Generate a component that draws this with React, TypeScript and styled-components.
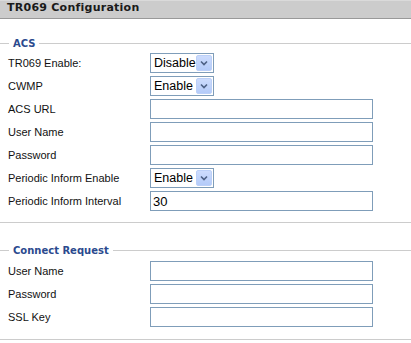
import * as React from "react";
import styled, { createGlobalStyle } from "styled-components";

const GlobalStyle = createGlobalStyle`
  body {
    margin: 0;
    background: #fff;
    font-family: "Liberation Sans", Arial, sans-serif;
  }
`;

const Page = styled.div`
  width: 411px;
  color: #000;
`;

const Header = styled.div`
  height: 17px;
  line-height: 17px;
  background: #cccccc;
  border-top: 1px solid #dadada;
  border-bottom: 1px solid #999;
  padding-left: 7px;
  font: bold 11px "DejaVu Sans", Verdana, sans-serif;
  letter-spacing: 0.25px;
  color: #1a1a1a;
`;

const Section = styled.div<{ top: number }>`
  display: flex;
  flex-direction: column;
  padding-top: ${(p) => p.top}px;
`;

const Legend = styled.div`
  display: flex;
  align-items: center;
  height: 13px;
  font: bold 10px "DejaVu Sans", Verdana, sans-serif;
  color: #2b4a8e;

  &::before,
  &::after {
    content: "";
    border-top: 1px solid #cccccc;
  }
  &::before {
    width: 9px;
  }
  &::after {
    flex: 1;
  }
  span {
    padding: 0 4px;
  }
`;

const Rows = styled.div<{ top: number }>`
  display: flex;
  flex-direction: column;
  gap: 3px;
  padding-top: ${(p) => p.top}px;
`;

const Row = styled.div`
  display: grid;
  grid-template-columns: 150px 1fr;
  align-items: center;
  height: 20px;
`;

const Label = styled.div`
  padding-left: 8px;
  font-size: 11px;
  color: #111;
`;

const TextInput = styled.input`
  box-sizing: border-box;
  width: 223px;
  height: 20px;
  margin: 0;
  border: 1px solid #7f9db9;
  padding: 0 2px;
  font: 13px "Liberation Sans", Arial, sans-serif;
  color: #000;
  outline: none;
`;

const SelectBox = styled.div`
  box-sizing: border-box;
  width: 64px;
  height: 20px;
  border: 1px solid #7f9db9;
  display: flex;
  align-items: center;
  justify-content: space-between;
  font-size: 12.5px;
  background: #fff;

  span {
    padding-left: 3px;
  }
`;

const DropButton = styled.div`
  box-sizing: border-box;
  width: 16px;
  height: 16px;
  margin-right: 1px;
  border: 1px solid #bcd0f8;
  border-radius: 2px;
  background: linear-gradient(#cddcfd, #b4cbf9);
  display: flex;
  align-items: center;
  justify-content: center;
`;

const Divider = styled.div<{ top: number }>`
  margin-top: ${(p) => p.top}px;
  border-top: 1px solid #cccccc;
`;

const Select = ({ value }: { value: string }) => (
  <SelectBox>
    <span>{value}</span>
    <DropButton>
      <svg width="8" height="6" viewBox="0 0 8 6">
        <path d="M1 1.5 L4 4.5 L7 1.5" fill="none" stroke="#4d6185" strokeWidth="1.6" />
      </svg>
    </DropButton>
  </SelectBox>
);

export default function App() {
  return (
    <Page>
      <GlobalStyle />
      <Header>TR069 Configuration</Header>

      <Section top={18}>
        <Legend>
          <span>ACS</span>
        </Legend>
        <Rows top={3}>
          <Row>
            <Label>TR069 Enable:</Label>
            <Select value="Disable" />
          </Row>
          <Row>
            <Label>CWMP</Label>
            <Select value="Enable" />
          </Row>
          <Row>
            <Label>ACS URL</Label>
            <TextInput defaultValue="" />
          </Row>
          <Row>
            <Label>User Name</Label>
            <TextInput defaultValue="" />
          </Row>
          <Row>
            <Label>Password</Label>
            <TextInput type="password" defaultValue="" />
          </Row>
          <Row>
            <Label>Periodic Inform Enable</Label>
            <Select value="Enable" />
          </Row>
          <Row>
            <Label>Periodic Inform Interval</Label>
            <TextInput defaultValue="30" />
          </Row>
        </Rows>
        <Divider top={11} />
      </Section>

      <Section top={21}>
        <Legend>
          <span>Connect Request</span>
        </Legend>
        <Rows top={4}>
          <Row>
            <Label>User Name</Label>
            <TextInput defaultValue="" />
          </Row>
          <Row>
            <Label>Password</Label>
            <TextInput type="password" defaultValue="" />
          </Row>
          <Row>
            <Label>SSL Key</Label>
            <TextInput defaultValue="" />
          </Row>
        </Rows>
        <Divider top={12} />
      </Section>
    </Page>
  );
}
